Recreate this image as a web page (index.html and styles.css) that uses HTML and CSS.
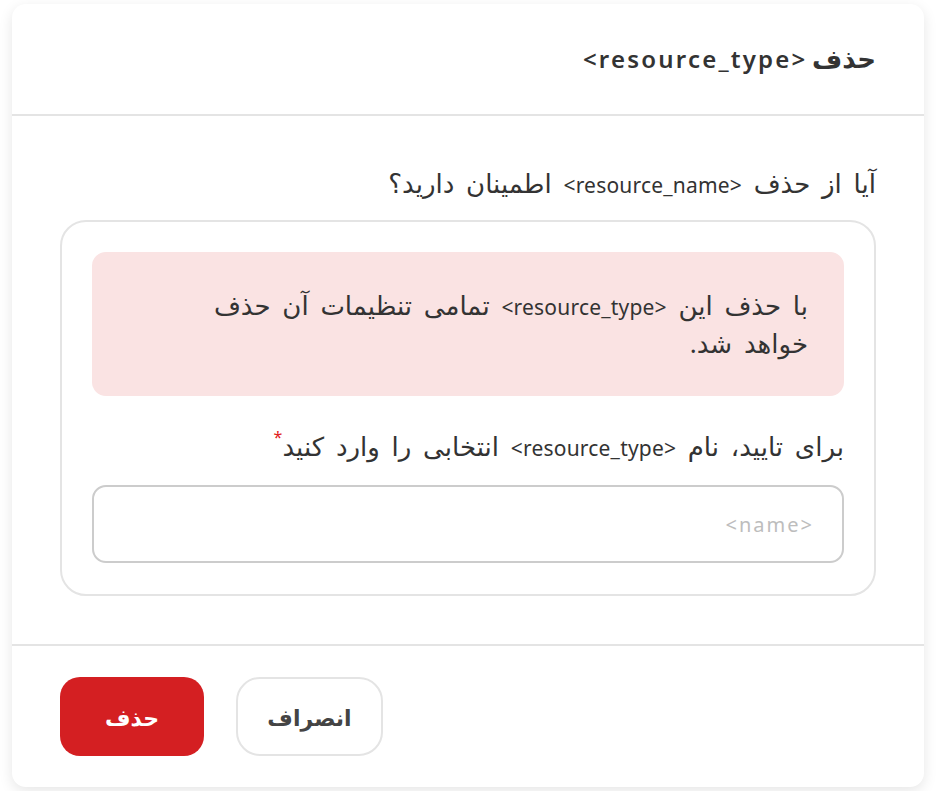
FILE: index.html
```html
<!DOCTYPE html>
<html lang="fa" dir="rtl">
<head>
<meta charset="utf-8">
<link rel="stylesheet" href="styles.css">
</head>
<body>
<div class="modal">
  <div class="modal-header">
    <h2 class="title">حذف <span class="en">&lt;resource_type&gt;</span></h2>
  </div>
  <div class="modal-body">
    <p class="question">آیا از حذف <span class="en">&lt;resource_name&gt;</span> اطمینان دارید؟</p>
    <div class="panel">
      <div class="alert">با حذف این <span class="en">&lt;resource_type&gt;</span> تمامی تنظیمات آن حذف خواهد شد.</div>
      <label class="label" for="name">برای تایید، نام <span class="en">&lt;resource_type&gt;</span> انتخابی را وارد کنید<span class="req">*</span></label>
      <input class="input" id="name" type="text" placeholder="<name>">
    </div>
  </div>
  <div class="modal-footer">
    <button class="btn btn-cancel" type="button">انصراف</button>
    <button class="btn btn-danger" type="button">حذف</button>
  </div>
</div>
</body>
</html>
```
FILE: styles.css
```css
* { box-sizing: border-box; }
html, body { margin: 0; background: #ffffff; }
body {
  padding: 4px 12px;
  font-family: "Noto Sans", "DejaVu Sans", sans-serif;
  color: #333333;
}
.modal {
  width: 912px;
  height: 783px;
  background: #fff;
  border-radius: 14px;
  box-shadow: 0 4px 14px rgba(0,0,0,0.10);
  display: flex;
  flex-direction: column;
}
.modal-header {
  height: 112px;
  border-bottom: 2px solid #e4e4e4;
  padding: 0 48px;
  display: flex;
  align-items: center;
}
.title {
  margin: 0;
  font-size: 26px;
  font-weight: 700;
  line-height: 38px;
  color: #333;
  padding-bottom: 2px;
}
.title .en {
  font-size: 24px;
  font-weight: 600;
  letter-spacing: 2.2px;
}
.modal-body {
  padding: 48px 48px 48px;
  border-bottom: 2px solid #e4e4e4;
}
.question {
  margin: 0 0 18px;
  font-size: 26px;
  line-height: 38px;
  word-spacing: 5px;
  color: #333;
}
.en {
  font-size: 21px;
  line-height: 20px;
  letter-spacing: 0.2px;
  word-spacing: 0;
}
.panel {
  border: 2px solid #e4e4e4;
  border-radius: 26px;
  padding: 30px 30px 31px;
  display: flex;
  flex-direction: column;
}
.alert {
  background: #fae3e3;
  border-radius: 14px;
  padding: 34px 36px 34px 72px;
  font-size: 26px;
  line-height: 38px;
  word-spacing: 5px;
  color: #333;
}
.label {
  margin-top: 31px;
  font-size: 26px;
  line-height: 38px;
  word-spacing: 5px;
  color: #333;
}
.req {
  color: #e02020;
  font-size: 16px;
  vertical-align: top;
  line-height: 20px;
}
.input {
  margin-top: 20px;
  height: 78px;
  border: 2px solid #cccccc;
  border-radius: 14px;
  padding: 0 28px;
  font-family: inherit;
  font-size: 20px;
  letter-spacing: 2px;
  direction: rtl;
  outline: none;
  background: #fff;
}
.input::placeholder { color: #bdbdbd; }
.modal-footer {
  flex: 1;
  padding: 0 48px;
  display: flex;
  align-items: center;
  justify-content: flex-end;
  gap: 32px;
}
.btn {
  height: 79px;
  font-family: inherit;
  font-size: 22px;
  font-weight: 700;
  cursor: pointer;
}
.btn-cancel {
  width: 147px;
  background: #fff;
  border: 2px solid #e4e4e4;
  border-radius: 24px;
  color: #444;
}
.btn-danger {
  width: 144px;
  background: #d41f22;
  border: none;
  border-radius: 20px;
  color: #fff;
}
```
